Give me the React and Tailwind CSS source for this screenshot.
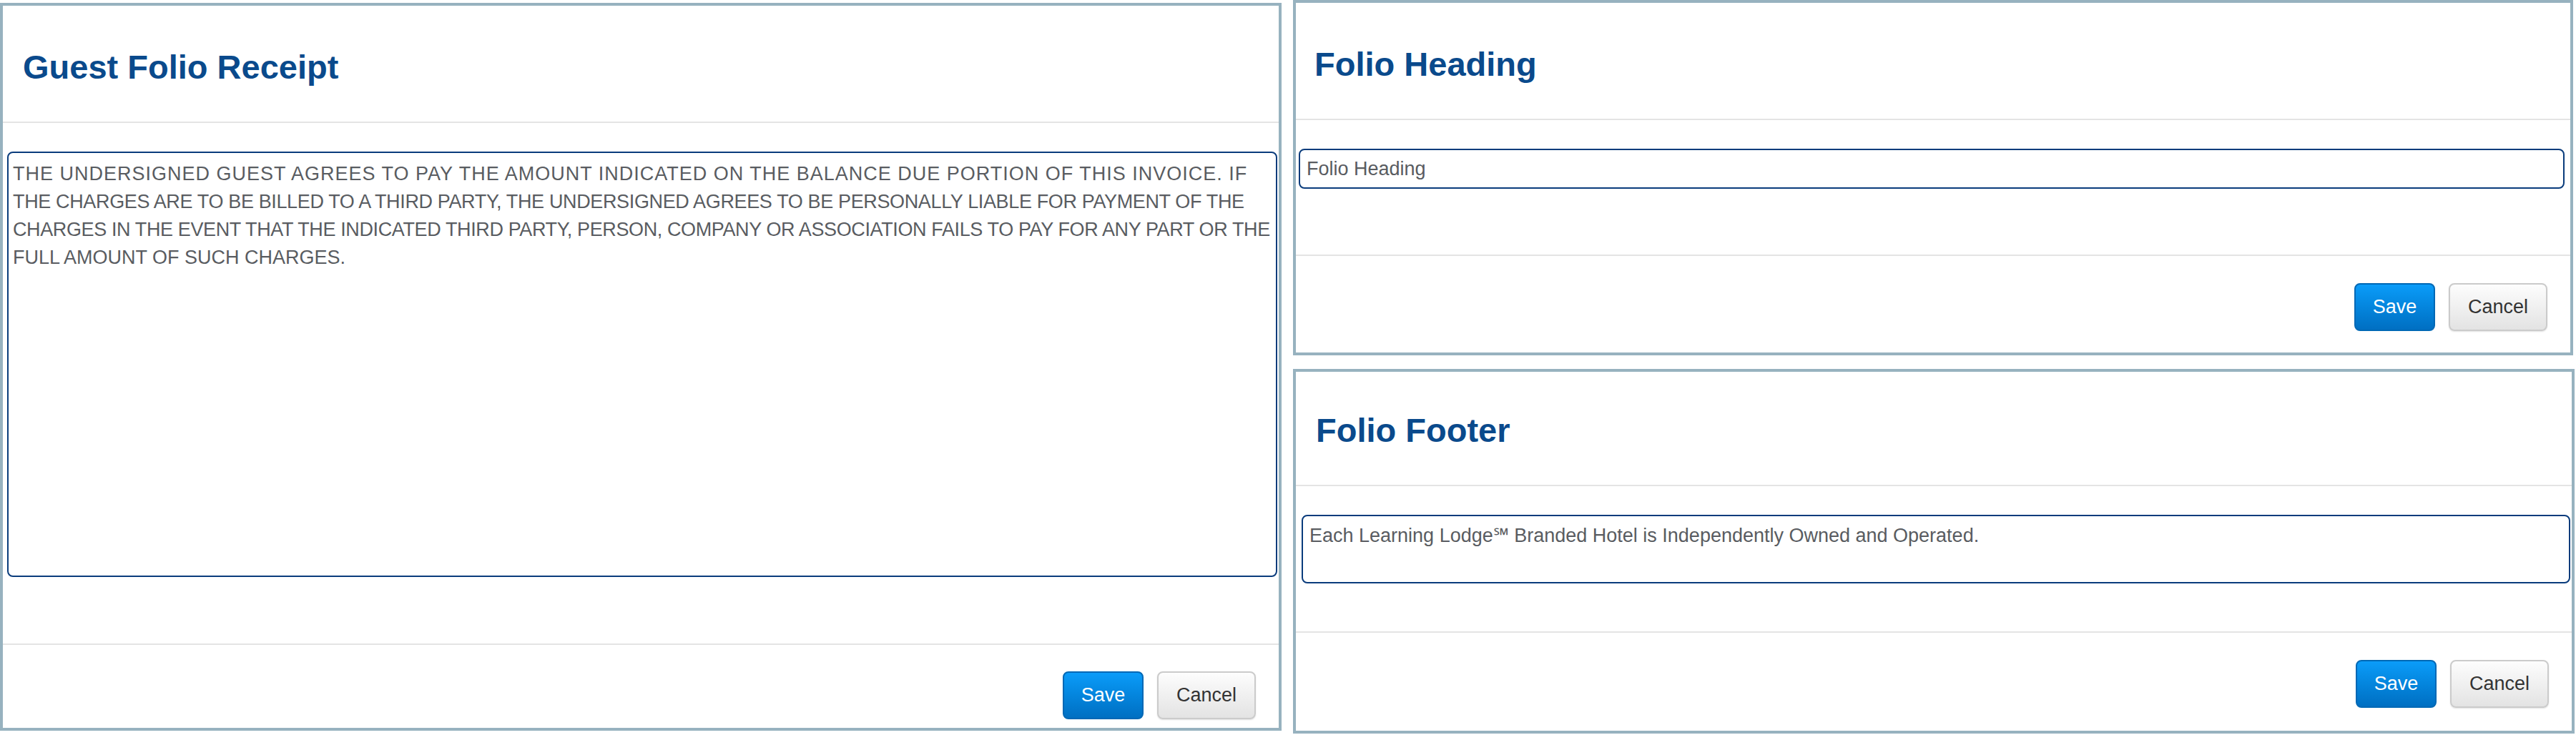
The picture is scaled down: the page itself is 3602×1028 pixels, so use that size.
import React from 'react';

// each line of the receipt keeps its own tracking so the wrap matches the original textarea
const receiptLines = [
  { text: 'THE UNDERSIGNED GUEST AGREES TO PAY THE AMOUNT INDICATED ON THE BALANCE DUE PORTION OF THIS INVOICE. IF', cls: 'tracking-[1px]' },
  { text: 'THE CHARGES ARE TO BE BILLED TO A THIRD PARTY, THE UNDERSIGNED AGREES TO BE PERSONALLY LIABLE FOR PAYMENT OF THE', cls: 'tracking-[-0.36px]' },
  { text: 'CHARGES IN THE EVENT THAT THE INDICATED THIRD PARTY, PERSON, COMPANY OR ASSOCIATION FAILS TO PAY FOR ANY PART OR THE', cls: 'tracking-[-0.38px]' },
  { text: 'FULL AMOUNT OF SUCH CHARGES.', cls: '' },
];

const footerText = 'Each Learning Lodge\u2120 Branded Hotel is Independently Owned and Operated.';

const Panel = ({ title, outer, header, body, footer, children }) => (
  <section className={`flex flex-col border-4 border-[#97b2bf] bg-white ${outer}`}>
    {/* Header */}
    <div className={`flex items-center border-b-2 border-[#e4e4e4] ${header}`}>
      <h3 className="text-[47px] leading-none font-bold text-[#0a4a8c]">{title}</h3>
    </div>

    {/* Body */}
    <div className={`border-b-2 border-[#e4e4e4] ${body}`}>{children}</div>

    {/* Actions */}
    <div className={`flex flex-1 justify-end gap-[19px] pr-[32px] ${footer}`}>
      <button className="h-[67px] w-[113px] rounded-[8px] border-2 border-[#0068b5] bg-linear-to-b from-[#0b9cf9] to-[#006fc2] text-[27px] text-white">
        Save
      </button>
      <button className="h-[67px] w-[138px] rounded-[8px] border-2 border-[#cbcbcb] bg-linear-to-b from-[#fdfdfd] to-[#e3e3e3] text-[27px] text-[#333] shadow-[0_1px_2px_rgba(0,0,0,0.12)]">
        Cancel
      </button>
    </div>
  </section>
);

export default function App() {
  return (
    <div className="flex h-[1028px] w-[3602px] gap-[16px] bg-white font-['Liberation_Sans',Arial,sans-serif]">
      {/* Guest Folio Receipt */}
      <Panel
        title="Guest Folio Receipt"
        outer="mt-[4px] h-[1018px] w-[1792px]"
        header="h-[164px] pl-[28px] pt-[8px]"
        body="pt-[40px] pb-[93px] pl-[6px] pr-[2px]"
        footer="pt-[37px]"
      >
        <div className="h-[595px] w-full overflow-hidden rounded-[8px] border-2 border-[#0a3c7c] px-[6px] pt-[10px] text-[27px] leading-[39px] text-[#595c61]">
          {receiptLines.map((line) => (
            <div key={line.text} className={`whitespace-nowrap ${line.cls}`}>
              {line.text}
            </div>
          ))}
        </div>
      </Panel>

      <div className="flex flex-col gap-[19px]">
        {/* Folio Heading */}
        <Panel
          title="Folio Heading"
          outer="h-[497px] w-[1790px]"
          header="h-[164px] pl-[26px] pt-[8px]"
          body="pt-[40px] pb-[92px] pl-[4px] pr-[8px]"
          footer="pt-[38px]"
        >
          <input
            readOnly
            value="Folio Heading"
            className="block h-[56px] w-full rounded-[8px] border-2 border-[#0a3c7c] px-[9px] text-[27px] text-[#595c61] outline-none"
          />
        </Panel>

        {/* Folio Footer */}
        <Panel
          title="Folio Footer"
          outer="h-[510px] w-[1792px]"
          header="h-[160px] pl-[28px] pt-[5px]"
          body="pt-[40px] pb-[67px] pl-[8px] pr-[2px]"
          footer="pt-[38px]"
        >
          <textarea
            readOnly
            wrap="off"
            value={footerText}
            className="block h-[96px] w-full resize-none overflow-hidden rounded-[8px] border-2 border-[#0a3c7c] px-[9px] pt-[8px] text-[27px] leading-[39px] text-[#595c61] outline-none"
          />
        </Panel>
      </div>
    </div>
  );
}
